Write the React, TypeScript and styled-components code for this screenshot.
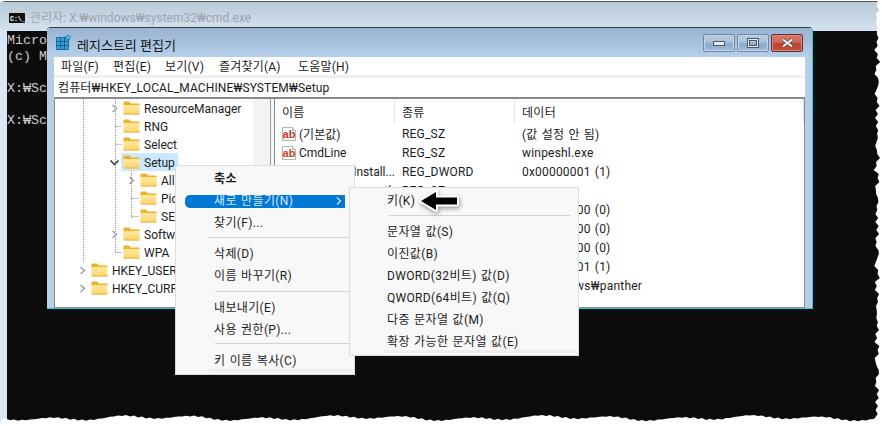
import React from "react";
import styled, { createGlobalStyle } from "styled-components";

const FONT = 'Roboto, "Noto Sans CJK KR", sans-serif';

const Global = createGlobalStyle`
  html, body { margin: 0; padding: 0; background: #fff; }
  body { font-family: ${FONT}; font-size: 12px; color: #1c1c1c; overflow: hidden; }
`;

const Desktop = styled.div`
  position: relative;
  width: 882px;
  height: 426px;
  overflow: hidden;
  background: #fff;
`;

/* ---------- console window ---------- */
const CmdWindow = styled.section`
  position: absolute;
  left: 0;
  top: 1px;
  width: 882px;
  height: 425px;
  display: flex;
  flex-direction: column;
  border-top: 1px solid #55585c;
  border-radius: 5px 0 0 0;
  background: #dbe6f3;
  box-sizing: border-box;
`;
const CmdTitle = styled.header`
  height: 29px;
  flex: none;
  display: flex;
  align-items: center;
  gap: 5px;
  padding-left: 9px;
  background: linear-gradient(#b9c9d7, #d6e2ef);
  color: #9aa4ae;
  font-size: 12px;
`;
const CmdBody = styled.div`
  flex: 1;
  margin-left: 7px;
  background: #0c0c0c;
  color: #cccccc;
  font-family: "Liberation Mono", monospace;
  font-size: 13.34px;
  line-height: 16px;
  padding-top: 2px;
  white-space: pre;
`;

/* ---------- regedit window ---------- */
const RegWindow = styled.section`
  position: absolute;
  left: 47px;
  top: 27px;
  width: 766px;
  height: 282px;
  box-sizing: border-box;
  display: flex;
  flex-direction: column;
  border-top: 1px solid #33383d;
  border-right: 1px solid #2bc6dc;
  border-bottom: 1px solid #2bc6dc;
  border-radius: 4px 4px 0 0;
  background: #b5cfe8;
`;
const RegTitle = styled.header`
  height: 29px;
  flex: none;
  display: flex;
  align-items: center;
  padding: 0 9px;
  background: linear-gradient(#99b4d1, #b6cfe9);
  font-size: 13px;
  color: #111;
`;
const RegTitleText = styled.span`
  margin-left: 5px;
  padding-top: 3px;
  flex: 1;
`;
const CaptionGroup = styled.div`
  display: flex;
  gap: 2px;
  margin-top: 1px;
`;
const CaptionButton = styled.button<{ $close?: boolean }>`
  width: 32px;
  height: 18px;
  padding: 0;
  display: flex;
  align-items: center;
  justify-content: center;
  border-radius: 2px;
  border: 1px solid ${(p) => (p.$close ? "#6d2a2a" : "#6f87a3")};
  box-shadow: inset 0 0 0 1px ${(p) => (p.$close ? "#d98a7c" : "#c5d6e8")};
  background: ${(p) =>
    p.$close
      ? "linear-gradient(#d8786a 0%, #cc6a58 45%, #b8412d 55%, #c0503c 100%)"
      : "linear-gradient(#b5cbe2 0%, #a9c2dc 45%, #8aa8c8 55%, #a4bedb 100%)"};
`;
const Client = styled.div`
  flex: 1;
  margin: 0 7px 0 7px;
  display: flex;
  flex-direction: column;
  background: #fff;
  min-height: 0;
`;
const MenuBar = styled.nav`
  height: 18px;
  box-sizing: border-box;
  padding: 0 0 2px 7px;
  flex: none;
  display: flex;
  align-items: center;
  background: #fff;
  font-size: 12px;
`;
const MenuEntry = styled.span<{ $w: number }>`
  width: ${(p) => p.$w}px;
  flex: none;
  white-space: nowrap;
  letter-spacing: 0.2px;
`;
const AddressBar = styled.div`
  height: 22px;
  flex: none;
  box-sizing: border-box;
  border-top: 3px solid #f0f0f0;
  display: flex;
  align-items: center;
  padding: 0 0 2px 4px;
  font-size: 12px;
  white-space: nowrap;
  letter-spacing: 0.12px;
`;
const Panes = styled.div`
  flex: 1;
  min-height: 0;
  display: flex;
  border-top: 2px solid #858a8f;
  border-left: 1px solid #858a8f;
  border-right: 1px solid #858a8f;
  border-bottom: 1px solid #858a8f;
  background: #fff;
`;
const TreePane = styled.div`
  position: relative;
  width: 215px;
  flex: none;
  overflow: hidden;
  background: #fff;
`;
const TreeTrack = styled.div`
  position: absolute;
  right: 0;
  top: 0;
  bottom: 0;
  width: 17px;
  background: #f3f3f3;
`;
const TreeLines = styled.svg`
  position: absolute;
  left: 0;
  top: 0;
`;
const TreeRow = styled.div<{ $level: number }>`
  position: relative;
  height: 18px;
  display: flex;
  align-items: center;
  padding-left: ${(p) => p.$level}px;
  white-space: nowrap;
`;
const TreeChevron = styled.span`
  width: 11px;
  height: 18px;
  flex: none;
  display: flex;
  align-items: center;
  justify-content: center;
  margin-right: 1px;
`;
const TreeLabel = styled.span<{ $selected?: boolean }>`
  display: flex;
  align-items: center;
  gap: 4px;
  height: 18px;
  padding: 0 3px 0 2px;
  background: ${(p) => (p.$selected ? "#cce8ff" : "transparent")};
`;
const TreeText = styled.span`
  padding-top: 2px;
`;
const Splitter = styled.div`
  width: 3px;
  flex: none;
  background: #f5f6f7;
  border-left: 1px solid #9a9ea3;
`;
const ListPane = styled.div`
  flex: 1;
  min-width: 0;
  border-left: 1px solid #858a8f;
  display: flex;
  flex-direction: column;
  overflow: hidden;
`;
const ListHeader = styled.div`
  height: 25px;
  flex: none;
  display: grid;
  grid-template-columns: 120px 120px 1fr;
  align-items: start;
`;
const HeaderCell = styled.div`
  height: 24px;
  display: flex;
  align-items: center;
  padding-left: 7px;
  border-right: 1px solid #e5e5e5;
  box-sizing: border-box;
  letter-spacing: 0.3px;
`;
const ListRow = styled.div`
  height: 19px;
  flex: none;
  display: grid;
  grid-template-columns: 120px 120px 1fr;
  align-items: center;
  white-space: nowrap;
`;
const NameCell = styled.div<{ $end?: boolean }>`
  display: flex;
  align-items: center;
  gap: 2px;
  padding-left: 6px;
  overflow: hidden;
  min-height: 16px;
  justify-content: ${(p) => (p.$end ? "flex-end" : "flex-start")};
`;
const Cell = styled.div`
  padding-left: 7px;
  overflow: hidden;
  min-height: 14px;
  letter-spacing: 0.2px;
  word-spacing: 1px;
`;

/* ---------- context menus ---------- */
const ContextMenu = styled.div<{ $x: number; $y: number; $w: number; $pad: number; $stripLeft: number }>`
  position: absolute;
  left: ${(p) => p.$x}px;
  top: ${(p) => p.$y}px;
  width: ${(p) => p.$w}px;
  box-sizing: border-box;
  padding: 1px 0 3px;
  background: #f8f8f8;
  border: 1px solid #dcdcdc;
  font-size: 12px;
  --pad: ${(p) => p.$pad}px;
  &::after {
    content: "";
    position: absolute;
    left: ${(p) => p.$stripLeft}px;
    right: 1px;
    bottom: 2px;
    height: 3px;
    background: #eeeeee;
  }
`;
const MenuItem = styled.div<{ $active?: boolean; $bold?: boolean }>`
  position: relative;
  height: 22px;
  box-sizing: border-box;
  padding-bottom: 2px;
  display: flex;
  align-items: center;
  padding-left: var(--pad);
  white-space: nowrap;
  font-weight: ${(p) => (p.$bold ? 700 : 400)};
  color: ${(p) => (p.$active ? "#d6e6f5" : "#1c1c1c")};
  ${(p) =>
    p.$active
      ? `&::before {
          content: "";
          position: absolute;
          left: 9px;
          right: 9px;
          top: 6px;
          bottom: 3px;
          border-radius: 5px 0 0 5px;
          background: #0078d4;
        }`
      : ""}
`;
const MenuText = styled.span`
  position: relative;
  letter-spacing: 0.35px;
  word-spacing: 1px;
`;
const MenuArrow = styled.svg`
  position: absolute;
  right: 12px;
  top: 8px;
`;
const MenuSep = styled.div<{ $h?: number; $line: number; $left: number; $right: number }>`
  height: ${(p) => p.$h ?? 9}px;
  position: relative;
  &::after {
    content: "";
    position: absolute;
    left: ${(p) => p.$left}px;
    right: ${(p) => p.$right}px;
    top: ${(p) => p.$line}px;
    height: 1px;
    background: #d2d2d2;
  }
`;
const PointerArrow = styled.svg`
  position: absolute;
  left: 412px;
  top: 184px;
  filter: drop-shadow(1px 2px 2px rgba(0, 0, 0, 0.4));
`;
const TornEdge = styled.svg`
  position: absolute;
  left: 0;
  top: 0;
`;

/* ---------- drawings ---------- */
const Folder = () => (
  <svg width="17" height="14" viewBox="0 0 17 14">
    <defs>
      <linearGradient id="fb" x1="0" y1="0" x2="0" y2="1">
        <stop offset="0" stopColor="#fde9a6" />
        <stop offset="1" stopColor="#fbd36a" />
      </linearGradient>
    </defs>
    <path d="M0.5 1.5a1 1 0 0 1 1-1h4.5l2 2h7.5a1 1 0 0 1 1 1v2h-16z" fill="#f4b01f" />
    <path d="M0.5 4h16v8.5a1 1 0 0 1-1 1h-14a1 1 0 0 1-1-1z" fill="url(#fb)" />
    <path d="M0.5 13h16" stroke="#eeb53c" strokeWidth="1" />
  </svg>
);
const Chevron = ({ open }: { open?: boolean }) => (
  <svg width="11" height="9" viewBox="0 0 11 9" fill="none" stroke={open ? "#333" : "#a0a0a0"} strokeWidth="1.5">
    {open ? <path d="M1.5 2.5 5.5 6.5 9.5 2.5" /> : <path d="M3.5 1 7.5 4.5 3.5 8" />}
  </svg>
);
const StringIcon = () => (
  <svg width="16" height="16" viewBox="0 0 16 16" style={{ flex: "none" }}>
    <path d="M1.5 1.5h10l3 3v10h-13z" fill="#fff" stroke="#b5b5b5" />
    <path d="M11.5 1.5v3h3" fill="#eee" stroke="#b5b5b5" />
    <text x="1.6" y="11.5" fontSize="11" fontWeight="700" fill="#d0391d" fontFamily="Liberation Sans, sans-serif">ab</text>
  </svg>
);
const RegIcon = () => (
  <svg width="16" height="17" viewBox="0 0 16 17" style={{ flex: "none" }}>
    <path d="M0.5 3.5h12v12h-12z" fill="#39a2d6" stroke="#1a6fa8" />
    <path d="M4.5 3.5v12M8.5 3.5v12M.5 7.5h12M.5 11.5h12" stroke="#125d93" />
    <path d="M12 0.5l1 1.5 2 .5-1.5 1.5.3 2-1.8-1-1.8 1 .3-2L9 2.5l2-.5z" fill="#4db5e8" stroke="#1f7fb5" strokeWidth=".6" />
  </svg>
);
const CmdIcon = () => (
  <svg width="16" height="12" viewBox="0 0 16 12" style={{ flex: "none" }}>
    <rect width="16" height="12" fill="#111" />
    <rect x="0" y="0" width="16" height="2" fill="#ccc" />
    <text x="1" y="9.5" fontSize="6.5" fontWeight="700" fill="#fff" fontFamily="Liberation Mono, monospace">C:\_</text>
  </svg>
);

function tornPath() {
  const noise = (i: number, a: number, b: number) =>
    Math.sin(i * a) * 1.5 + Math.sin(i * b + 1.3) * 1.2 + Math.sin(i * (a + b) * 1.7) * 0.9;
  let d = "M882 0 L878 0";
  for (let y = 6; y <= 416; y += 4) d += ` L${(877 + noise(y, 0.73, 1.31)).toFixed(1)} ${y}`;
  for (let x = 874; x >= 0; x -= 4)
    d += ` L${x} ${(418 + Math.sin(x * 0.09) * 1.6 + Math.sin(x * 0.031) * 1.2 + Math.sin(x * 0.83) * 0.7).toFixed(1)}`;
  return d + " L0 426 L882 426 Z";
}

type TreeItem = { label: string; level: number; chevron?: "open" | "closed"; selected?: boolean };
const tree: TreeItem[] = [
  { label: "ResourceManager", level: 54, chevron: "closed" },
  { label: "RNG", level: 54 },
  { label: "Select", level: 54 },
  { label: "Setup", level: 54, chevron: "open", selected: true },
  { label: "All", level: 71, chevron: "closed" },
  { label: "Pic", level: 71 },
  { label: "SET", level: 71 },
  { label: "Softw", level: 54, chevron: "closed" },
  { label: "WPA", level: 54 },
  { label: "HKEY_USER", level: 22, chevron: "closed" },
  { label: "HKEY_CURR", level: 22, chevron: "closed" },
];

type Value = { name?: string; end?: boolean; icon?: boolean; type?: string; data: string };
const values: Value[] = [
  { name: "(기본값)", icon: true, type: "REG_SZ", data: "(값 설정 안 됨)" },
  { name: "CmdLine", icon: true, type: "REG_SZ", data: "winpeshl.exe" },
  { name: "Install...", end: true, type: "REG_DWORD", data: "0x00000001 (1)" },
  { name: "th", end: true, type: "REG_SZ", data: "..." },
  { data: "0x00000000 (0)" },
  { data: "0x00000000 (0)" },
  { data: "0x00000000 (0)" },
  { data: "0x00000001 (1)" },
  { data: "X:₩windows₩panther" },
];

const menus: [string, number][] = [
  ["파일(F)", 52],
  ["편집(E)", 52],
  ["보기(V)", 54],
  ["즐겨찾기(A)", 79],
  ["도움말(H)", 60],
];

export default function App() {
  return (
    <Desktop>
      <Global />
      <CmdWindow>
        <CmdTitle>
          <CmdIcon />
          <span>관리자: X:₩windows₩system32₩cmd.exe</span>
        </CmdTitle>
        <CmdBody>{"Micro\n(c) M\n\nX:₩Sc\n\nX:₩Sc"}</CmdBody>
      </CmdWindow>

      <RegWindow>
        <RegTitle>
          <RegIcon />
          <RegTitleText>레지스트리 편집기</RegTitleText>
          <CaptionGroup>
            <CaptionButton aria-label="최소화">
              <svg width="12" height="6" viewBox="0 0 12 6">
                <rect x="0.5" y="1.5" width="11" height="4" fill="#e8edf2" stroke="#4a5866" />
              </svg>
            </CaptionButton>
            <CaptionButton aria-label="최대화">
              <svg width="12" height="10" viewBox="0 0 12 10">
                <rect x="1" y="1" width="10" height="8" fill="none" stroke="#e8edf2" strokeWidth="2" />
                <rect x="0.5" y="0.5" width="11" height="9" fill="none" stroke="#4a5866" strokeWidth="1" />
                <rect x="2.5" y="2.5" width="7" height="5" fill="none" stroke="#4a5866" strokeWidth="1" />
              </svg>
            </CaptionButton>
            <CaptionButton $close aria-label="닫기">
              <svg width="13" height="10" viewBox="0 0 13 10" fill="none">
                <path d="M2 1.5 11 8.5M11 1.5 2 8.5" stroke="#4a4a4a" strokeWidth="3.4" />
                <path d="M2 1.5 11 8.5M11 1.5 2 8.5" stroke="#f2f2f2" strokeWidth="2" />
              </svg>
            </CaptionButton>
          </CaptionGroup>
        </RegTitle>
        <Client>
          <MenuBar>
            {menus.map(([m, w]) => (
              <MenuEntry key={m} $w={w}>{m}</MenuEntry>
            ))}
          </MenuBar>
          <AddressBar>컴퓨터₩HKEY_LOCAL_MACHINE₩SYSTEM₩Setup</AddressBar>
          <Panes>
            <TreePane>
              <TreeTrack />
              <TreeLines width="198" height="203" viewBox="0 0 198 203" fill="none" stroke="#8c8c8c" strokeDasharray="1 1">
                <path d="M28.5 0V163M60.5 0V153.5M60.5 27.5H67M60.5 45.5H67M60.5 153.5H67M76.5 72V119.5M76.5 99.5H84M76.5 117.5H84" />
              </TreeLines>
              {tree.map((t) => (
                <TreeRow key={t.label} $level={t.level}>
                  <TreeChevron>
                    {t.chevron ? <Chevron open={t.chevron === "open"} /> : null}
                  </TreeChevron>
                  <TreeLabel $selected={t.selected}>
                    <Folder />
                    <TreeText>{t.label}</TreeText>
                  </TreeLabel>
                </TreeRow>
              ))}
            </TreePane>
            <Splitter />
            <ListPane>
              <ListHeader>
                <HeaderCell>이름</HeaderCell>
                <HeaderCell>종류</HeaderCell>
                <HeaderCell>데이터</HeaderCell>
              </ListHeader>
              {values.map((v, i) => (
                <ListRow key={i}>
                  <NameCell $end={v.end}>
                    {v.icon ? <StringIcon /> : null}
                    {v.name ? <span>{v.name}</span> : null}
                  </NameCell>
                  <Cell>{v.type}</Cell>
                  <Cell>{v.data}</Cell>
                </ListRow>
              ))}
            </ListPane>
          </Panes>
        </Client>
      </RegWindow>

      <ContextMenu $x={175} $y={165} $w={180} $pad={38} $stripLeft={33}>
        <MenuItem $bold><MenuText>축소</MenuText></MenuItem>
        <MenuItem $active>
          <MenuText>새로 만들기(N)</MenuText>
          <MenuArrow width="6" height="8" viewBox="0 0 6 8" fill="none" stroke="#dfeaf5" strokeWidth="1.2">
            <path d="M1 0.5 4.5 4 1 7.5" />
          </MenuArrow>
        </MenuItem>
        <MenuItem><MenuText>찾기(F)...</MenuText></MenuItem>
        <MenuSep $line={4} $left={33} $right={1} />
        <MenuItem><MenuText>삭제(D)</MenuText></MenuItem>
        <MenuItem><MenuText>이름 바꾸기(R)</MenuText></MenuItem>
        <MenuSep $h={10} $line={5} $left={39} $right={1} />
        <MenuItem><MenuText>내보내기(E)</MenuText></MenuItem>
        <MenuItem><MenuText>사용 권한(P)...</MenuText></MenuItem>
        <MenuSep $line={3} $left={39} $right={1} />
        <MenuItem><MenuText>키 이름 복사(C)</MenuText></MenuItem>
      </ContextMenu>

      <ContextMenu $x={349} $y={187} $w={230} $pad={37} $stripLeft={33}>
        <MenuItem><MenuText>키(K)</MenuText></MenuItem>
        <MenuSep $line={4} $left={39} $right={8} />
        <MenuItem><MenuText>문자열 값(S)</MenuText></MenuItem>
        <MenuItem><MenuText>이진값(B)</MenuText></MenuItem>
        <MenuItem><MenuText>DWORD(32비트) 값(D)</MenuText></MenuItem>
        <MenuItem><MenuText>QWORD(64비트) 값(Q)</MenuText></MenuItem>
        <MenuItem><MenuText>다중 문자열 값(M)</MenuText></MenuItem>
        <MenuItem><MenuText>확장 가능한 문자열 값(E)</MenuText></MenuItem>
      </ContextMenu>

      <PointerArrow width="52" height="34" viewBox="0 0 52 34">
        <path d="M9 17 24 8V13.5H45V20.5H24V26Z" fill="#000" stroke="#fff" strokeWidth="4" strokeLinejoin="round" paintOrder="stroke" />
      </PointerArrow>

      <TornEdge width="882" height="426" viewBox="0 0 882 426">
        <path d={tornPath()} fill="#fff" />
      </TornEdge>
    </Desktop>
  );
}
